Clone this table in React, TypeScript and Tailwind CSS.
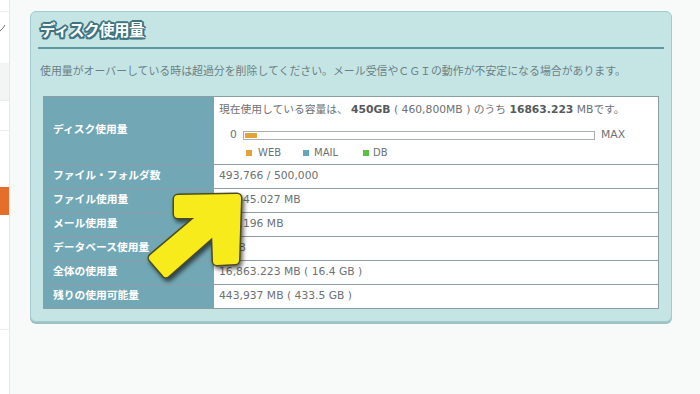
const font = "font-['DejaVu_Sans','Noto_Sans_CJK_JP',sans-serif]";

const rows: [string, string][] = [
  ["ファイル・フォルダ数", "493,766 / 500,000"],
  ["ファイル使用量", "16,545.027 MB"],
  ["メール使用量", "318.196 MB"],
  ["データベース使用量", "0 MB"],
  ["全体の使用量", "16,863.223 MB ( 16.4 GB )"],
  ["残りの使用可能量", "443,937 MB ( 433.5 GB )"],
];

function Arrow() {
  const d =
    "M37 18 L96 17 L94 79 L76 80 L75 48 L25 92 L12 77 L64 33 L37 33 Z";
  return (
    <svg
      className="absolute left-[110px] top-[169px] drop-shadow-[2px_3px_2px_rgba(0,0,0,0.6)]"
      width="110"
      height="110"
      viewBox="0 0 110 110"
    >
      <path d={d} fill="#4d4b22" stroke="#4d4b22" strokeWidth="11" strokeLinejoin="round" />
      <path d={d} fill="#f7eb1b" stroke="#f7eb1b" strokeWidth="8" strokeLinejoin="round" />
    </svg>
  );
}

export default function App() {
  return (
    <div className={`flex h-[394px] w-[700px] bg-[#f8f9f9] ${font}`}>
      {/* sidebar stub */}
      <div className="flex w-[10px] shrink-0 flex-col border-r border-[#e6e8e8] bg-white">
        <div className="h-[12px] border-b border-[#ececec]" />
        <div className="h-[51px]">
          <svg width="6" height="10" viewBox="0 0 6 10" className="mt-[12px]">
            <polyline points="0,7 3,4 5,1" fill="none" stroke="#777" strokeWidth="1" />
          </svg>
        </div>
        <div className="h-[37px] bg-[#f3f4f4]" />
        <div className="h-[30px] border-t border-[#ececec]" />
        <div className="h-[57px] border-t border-[#ececec]" />
        <div className="h-[28px] bg-[#e56f2a]" />
        <div className="h-[114px]" />
        <div className="border-t border-[#ececec]" />
      </div>

      <div className="pl-[20px] pt-[11px]">
        <div className="relative w-[642px] rounded-[6px] border border-[#a3cbce] bg-[#c5e5e5] shadow-[0_2px_0_#9cc2c5]">
          <div className="mx-[7px] border-b-2 border-[#5f97a2] pb-[5px] pt-[8px]">
            <h1 className="pl-[2px] text-[15.5px] font-bold leading-[22px] tracking-[-0.5px] text-white [text-shadow:2px_0_0_#3f7480,-2px_0_0_#3f7480,0_2px_0_#3f7480,0_-2px_0_#3f7480,1.5px_1.5px_0_#3f7480,-1.5px_-1.5px_0_#3f7480,1.5px_-1.5px_0_#3f7480,-1.5px_1.5px_0_#3f7480]">
              ディスク使用量
            </h1>
          </div>

          <p className="mt-[16px] pl-[9px] text-[10.9px] leading-[14px] text-[#6a8086]">
            使用量がオーバーしている時は超過分を削除してください。メール受信やＣＧＩの動作が不安定になる場合があります。
          </p>

          <div className="px-[12px] pb-[12px] pt-[17px]">
            <table className="w-[616px] border-collapse text-[10.75px]">
              <tbody>
                <tr className="h-[68px]">
                  <th className="w-[170px] border border-[#8a9ea3] bg-[#72a8b5] pl-[9px] text-left font-bold text-white">
                    ディスク使用量
                  </th>
                  <td className="border border-[#8a9ea3] bg-white pl-[5px] align-top text-[#6c7173]">
                    <div className="mt-[6px] leading-[14px]">
                      現在使用している容量は、 <b className="text-[#555a5c]">450GB</b> ( 460,800MB ) のうち{" "}
                      <b className="text-[#555a5c]">16863.223</b> MBです。
                    </div>
                    <div className="mt-[12px] flex items-center pl-[11px] leading-[12px]">
                      <span className="w-[13px]">0</span>
                      <div className="flex h-[9px] w-[352px] border border-[#a9aeb0] bg-white p-[1px]">
                        <div className="h-full w-[12px] bg-[#e3a33a]" />
                      </div>
                      <span className="ml-[6px]">MAX</span>
                    </div>
                    <div className="mt-[6px] flex items-center pl-[27px] text-[10px] leading-[12px]">
                      <span className="h-[6px] w-[6px] bg-[#e3a33a]" />
                      <span className="ml-[6px] w-[45px]">WEB</span>
                      <span className="h-[6px] w-[6px] bg-[#5fa8c4]" />
                      <span className="ml-[5px] w-[49px]">MAIL</span>
                      <span className="h-[6px] w-[6px] bg-[#5cc043]" />
                      <span className="ml-[4px]">DB</span>
                    </div>
                  </td>
                </tr>
                {rows.map(([label, value]) => (
                  <tr key={label} className="h-[24px]">
                    <th className="border border-[#8a9ea3] bg-[#72a8b5] pl-[9px] text-left font-bold text-white">
                      {label}
                    </th>
                    <td className="border border-[#8a9ea3] bg-white pl-[5px] text-[#6c7173]">{value}</td>
                  </tr>
                ))}
              </tbody>
            </table>
          </div>

          <Arrow />
        </div>
      </div>
    </div>
  );
}
